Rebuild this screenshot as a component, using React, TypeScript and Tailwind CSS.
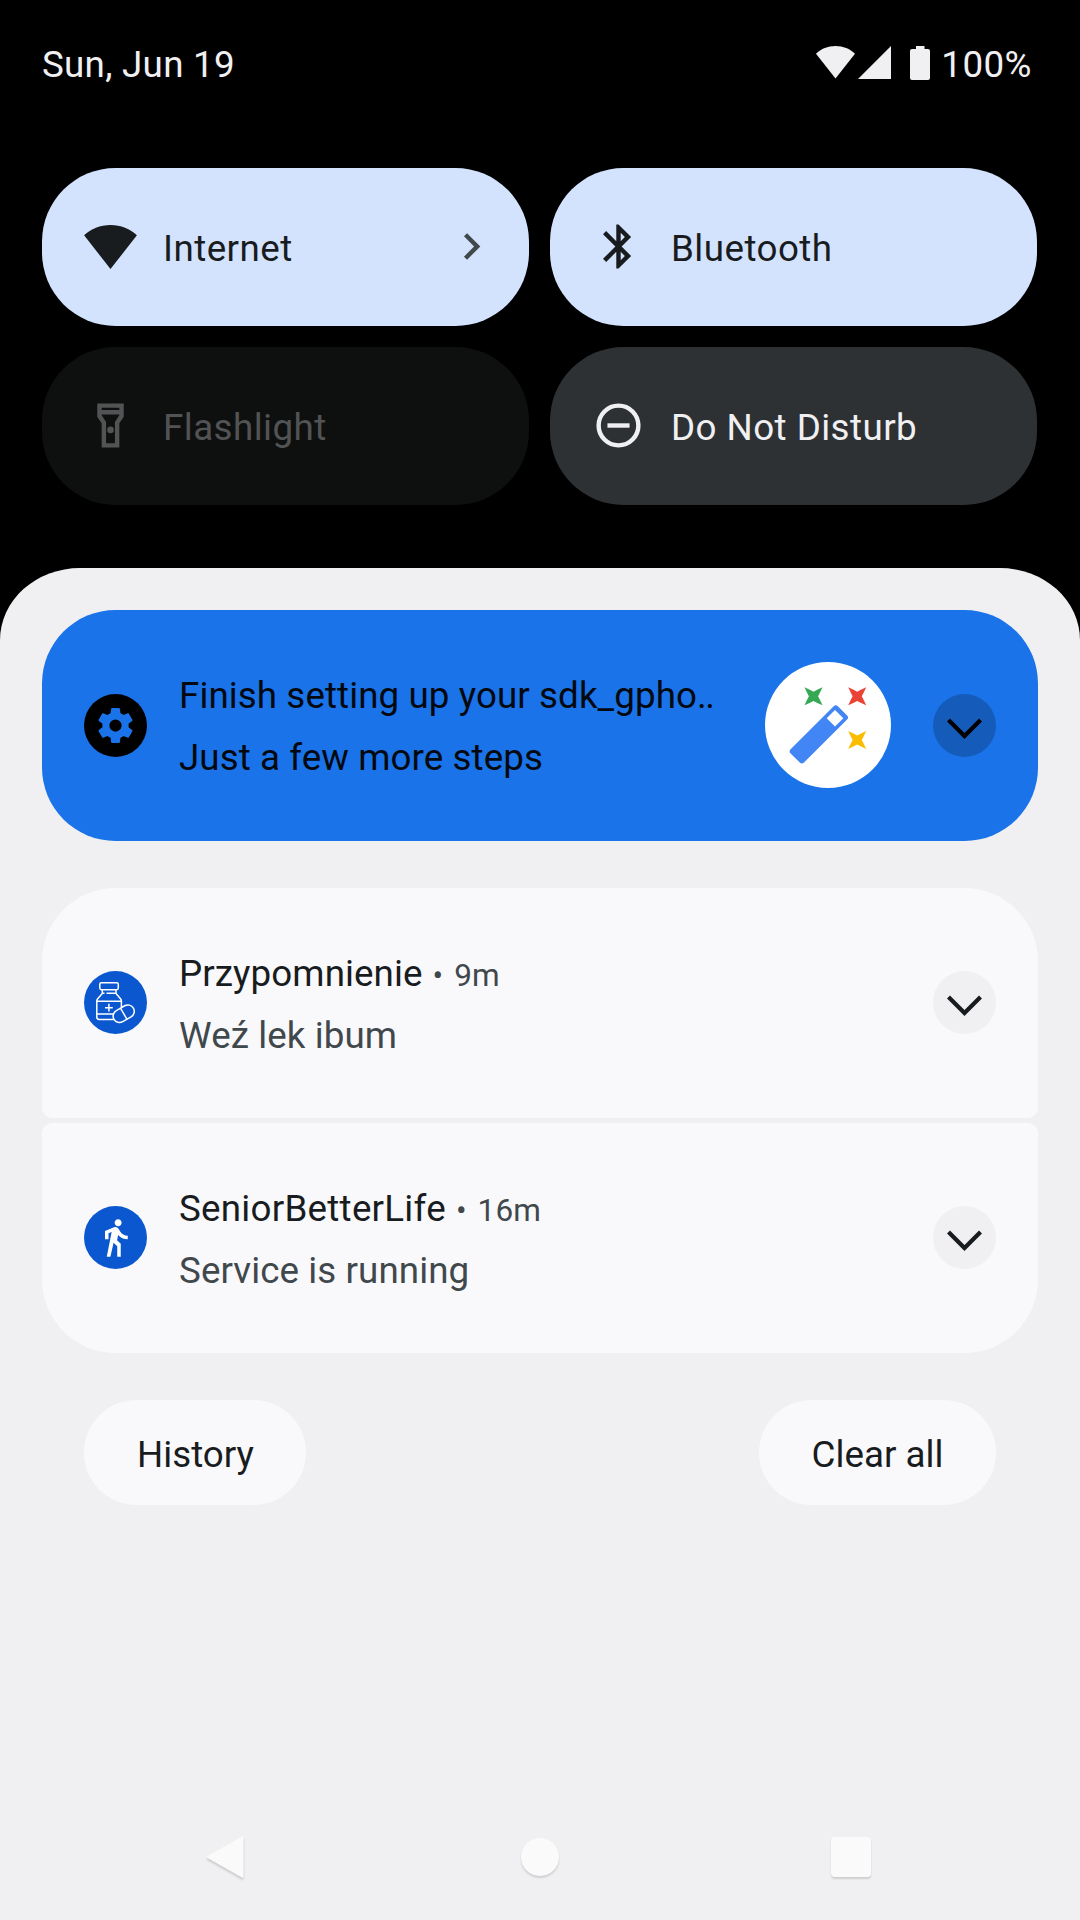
import type { ReactNode } from "react";

function WifiIcon({ className }: { className: string }) {
  return (
    <svg viewBox="0 0 24 20" className={className} fill="currentColor">
      <path d="M12 0C7.3 0 3.1 1.7 0 4.7L12 20 24 4.7C20.900 1.700 16.700 0 12 0z" />
    </svg>
  );
}

function Tile({ icon, label, tone, chevron }: { icon: ReactNode; label: string; tone: string; chevron?: boolean }) {
  return (
    <div className={`flex h-[158px] items-center rounded-[73.5px] pl-[42px] pr-[31px] ${tone}`}>
      <div className="mb-px flex size-[53px] shrink-0 items-center justify-center">{icon}</div>
      <div className="ml-[26px] flex-1 pt-[3px] leading-[50px] tracking-[0.45px]">{label}</div>
      {chevron && (
        <svg viewBox="0 0 24 24" className="mb-px size-[53px] text-[#41484c]" fill="currentColor">
          <path d="M10 6 8.590 7.410 13.170 12l-4.580 4.590L10 18l6-6z" />
        </svg>
      )}
    </div>
  );
}

function ExpandButton({ tone }: { tone: string }) {
  return (
    <div className={`mb-px flex size-[63px] shrink-0 items-center justify-center rounded-full ${tone}`}>
      <svg viewBox="0 0 63 63" className="size-[63px]" fill="none" stroke="currentColor" strokeWidth="4.2">
        <path d="M15.500 26 31.500 42 47.500 26" />
      </svg>
    </div>
  );
}

function Notification({
  icon,
  title,
  time,
  body,
  tone,
  bodyTone,
  expandTone,
  image,
}: {
  icon: ReactNode;
  title: ReactNode;
  time?: string;
  body: string;
  tone: string;
  bodyTone: string;
  expandTone: string;
  image?: ReactNode;
}) {
  return (
    <div className={`flex items-center px-[42px] ${tone}`}>
      <div className="mb-px shrink-0">{icon}</div>
      <div
        className={`ml-[32px] flex-1 leading-[62px] tracking-[0.08px] whitespace-nowrap ${time ? "pt-[4px]" : "pt-[2px]"}`}
      >
        <div className="flex h-[62px] items-baseline">
          {title}
          {time && (
            <span className="ml-[10px] flex gap-[11px] text-[31.5px] text-[#41484c]">
              <span>•</span>
              <span>{time}</span>
            </span>
          )}
        </div>
        <div className={bodyTone}>{body}</div>
      </div>
      {image}
      <ExpandButton tone={expandTone} />
    </div>
  );
}

const star = "M-9-9Q-3.500-6.500 0-4.600 3.500-6.500 9-9 6.500-3.500 4.600 0 6.500 3.500 9 9 3.500 6.500 0 4.600-3.500 6.500-9 9-6.500 3.500-4.600 0-6.500-3.500-9-9z";

function MagicWand() {
  return (
    <svg viewBox="0 0 126 126" className="mr-[42px] mb-[2px] size-[126px] shrink-0">
      <circle cx="63" cy="63" r="63" fill="#fff" />
      <path
        fill="#4285f4"
        fillRule="evenodd"
        d="M25.600 87.300 68.700 44.200a3 3 0 0 1 4.200 0L82.100 53.400a3 3 0 0 1 0 4.200L39 100.500a3 3 0 0 1-4.200 0L25.600 91.500a3 3 0 0 1 0-4.200zM70 48 61.700 56.300 70 64.500 78.300 56.200z"
      />
      <path d={star} transform="translate(48.500 34.300)" fill="#34a853" />
      <path d={star} transform="translate(92.200 34.300)" fill="#ea4335" />
      <path d={star} transform="translate(92.200 78)" fill="#fbbc04" />
    </svg>
  );
}

function SettingsBadge() {
  return (
    <svg viewBox="0 0 63 63" className="size-[63px] shrink-0">
      <circle cx="31.5" cy="31.5" r="31.5" fill="#000" />
      <g transform="translate(10.500 10.500) scale(1.750)" fill="#1a73e8">
        <path d="M19.440 12.990c.04-.32.06-.65.06-.99s-.02-.67-.07-.99l2.110-1.650c.19-.15.240-.42.120-.64l-2-3.460c-.12-.22-.39-.3-.61-.22l-2.490 1c-.52-.4-1.080-.73-1.690-.98l-.38-2.650A.49.49 0 0 0 14 2h-4c-.25 0-.46.180-.49.420l-.38 2.650c-.61.250-1.170.590-1.690.980l-2.490-1c-.23-.09-.49 0-.61.220l-2 3.460c-.13.220-.07.490.120.640l2.110 1.650c-.04.320-.07.650-.07.990s.03.670.07.980l-2.110 1.650c-.19.150-.24.420-.12.640l2 3.460c.12.220.390.300.610.220l2.490-1c.52.400 1.080.730 1.690.980l.38 2.650c.03.240.240.420.490.420h4c.25 0 .46-.18.490-.42l.38-2.650c.61-.25 1.170-.59 1.690-.98l2.490 1c.23.090.490 0 .610-.22l2-3.460c.12-.22.070-.49-.12-.64l-2.110-1.650zM12 15.500a3.500 3.500 0 1 1 0-7 3.500 3.500 0 0 1 0 7z" />
      </g>
    </svg>
  );
}

function MedicineBadge() {
  return (
    <svg viewBox="0 0 63 63" className="size-[63px] shrink-0" fill="none" stroke="#fff" strokeWidth="1.5">
      <circle cx="31.5" cy="31.5" r="31.5" fill="#0b57d0" stroke="none" />
      <rect x="15.800" y="11.700" width="18.500" height="7" rx="1.600" />
      <path d="M18.300 19v3.500L13.500 28c-.5.700-.7 1.300-.7 2v16c0 1.500.9 2.400 2.400 2.400h14.500M32 19v3.500l4.700 5.500c.5.700.7 1.300.7 2v6M18.500 22.300h2m2 0h9.500M13 30.200h24.300M13 43h16.500M24.900 32.800v7.800M21 36.700h7.800" />
      <g transform="rotate(-30 39.700 42.700)">
        <rect x="28.500" y="36.300" width="22.400" height="12.800" rx="6.400" fill="#0b57d0" />
        <path d="M39.700 36.300v12.800" />
      </g>
    </svg>
  );
}

function WalkBadge() {
  return (
    <svg viewBox="0 0 63 63" className="size-[63px] shrink-0">
      <circle cx="31.5" cy="31.5" r="31.5" fill="#0b57d0" />
      <path
        transform="translate(10.500 10.500) scale(1.750)"
        fill="#fff"
        d="M13.500 5.500c1.100 0 2-.9 2-2s-.9-2-2-2-2 .9-2 2 .9 2 2 2zM9.800 8.900 7 23h2.100l1.800-8 2.100 2v6h2v-7.500l-2.100-2 .6-3C14.800 12 16.800 13 19 13v-2c-1.900 0-3.500-1-4.300-2.400l-1-1.600c-.4-.6-1-1-1.700-1-.3 0-.5.100-.8.100L6 8.300V13h2V9.600l1.800-.7"
      />
    </svg>
  );
}

export default function App() {
  return (
    <div className="flex h-[1920px] w-[1080px] flex-col overflow-hidden bg-black font-['Roboto',sans-serif] text-[36.75px] text-[#191c1e]">
      <header className="flex h-[168px] items-start justify-between pt-[39px] pl-[42px] pr-[48px] leading-[50px] text-[#f0f0f3]">
        <div className="pt-px tracking-[0.27px]">Sun, Jun 19</div>
        <div className="flex">
          <WifiIcon className="mt-[7px] h-[32.5px] w-[39px]" />
          <svg viewBox="0 0 33 33" className="mt-[7px] ml-[3px] size-[33px]" fill="currentColor">
            <path d="M33 0v33H0z" />
          </svg>
          <svg viewBox="0 0 20 34" className="mt-[7px] ml-[19px] h-[34px] w-[20px]" fill="currentColor">
            <path d="M6 0h8.500v3H18a2 2 0 0 1 2 2v27a2 2 0 0 1-2 2H2a2 2 0 0 1-2-2V5a2 2 0 0 1 2-2h4z" />
          </svg>
          <div className="ml-[11px] pt-px tracking-[0.45px]">100%</div>
        </div>
      </header>

      <section className="grid grid-cols-2 gap-[21px] pl-[42px] pr-[43px]">
        <Tile
          label="Internet"
          chevron
          tone="bg-[#d3e3fd]"
          icon={<WifiIcon className="h-[44px] w-[53px]" />}
        />
        <Tile
          label="Bluetooth"
          tone="bg-[#d3e3fd]"
          icon={
            <svg viewBox="0 0 24 24" className="size-[53px]" fill="currentColor">
              <path d="M17.710 7.710 12 2h-1v7.590L6.410 5 5 6.410 10.590 12 5 17.590 6.410 19 11 14.410V22h1l5.710-5.710-4.300-4.290 4.300-4.290zM13 5.830l1.880 1.880L13 9.590V5.830zm1.880 10.460L13 18.170v-3.760l1.880 1.880z" />
            </svg>
          }
        />
        <Tile
          label="Flashlight"
          tone="bg-[#0e100f] text-[#525354]"
          icon={
            <svg viewBox="0 0 24 24" className="size-[53px]" fill="currentColor">
              <path d="M18 2H6v6l2 3v11h8V11l2-3V2zm-2 2v1H8V4h8zm-2 6.400V20h-4V10.400L8 7.400V7h8v.4l-2 3z" />
              <circle cx="12" cy="14" r="1.500" />
            </svg>
          }
        />
        <Tile
          label="Do Not Disturb"
          tone="bg-[#2e3133] text-[#f0f0f3]"
          icon={
            <svg viewBox="0 0 24 24" className="size-[53px]" fill="none" stroke="currentColor" strokeWidth="2">
              <circle cx="12" cy="12" r="9" />
              <path d="M7 12h10" />
            </svg>
          }
        />
      </section>

      <main className="mt-[63px] flex flex-1 flex-col rounded-t-[80px_72px] bg-[#f0f0f2] px-[42px] pt-[42px]">
        <Notification
          icon={<SettingsBadge />}
          title={
            <span>
              Finish setting up your sdk_gpho<span className="tracking-[-1.6px]">..</span>
            </span>
          }
          body="Just a few more steps"
          tone="h-[231px] rounded-[73.5px] bg-[#1a73e8] pt-px text-[#04080f]"
          bodyTone="text-[#04080f]"
          expandTone="bg-[#155cba] text-black"
          image={<MagicWand />}
        />
        <div className="mt-[47px] flex flex-col gap-[5px]">
          <Notification
            icon={<MedicineBadge />}
            title="Przypomnienie"
            time="9m"
            body="Weź lek ibum"
            tone="h-[230px] rounded-t-[73.5px] rounded-b-[10px] bg-[#f9f9fc]"
            bodyTone="text-[#41484c]"
            expandTone="bg-[#f0f0f2] text-[#191c1e]"
          />
          <Notification
            icon={<WalkBadge />}
            title={<span className="tracking-[0.25px]">SeniorBetterLife</span>}
            time="16m"
            body="Service is running"
            tone="h-[230px] rounded-t-[10px] rounded-b-[73.5px] bg-[#f9f9fc]"
            bodyTone="text-[#41484c]"
            expandTone="bg-[#f0f0f2] text-[#191c1e]"
          />
        </div>
        <div className="mt-[47px] flex justify-between px-[42px]">
          <button className="h-[105px] w-[222px] rounded-full bg-[#f9f9fc] pt-[4px] pl-px leading-[101px]">History</button>
          <button className="h-[105px] w-[237px] rounded-full bg-[#f9f9fc] pt-[4px] leading-[101px]">Clear all</button>
        </div>
        <nav className="mt-auto mb-[39px] flex h-[48px] items-center justify-between pl-[163px] pr-[167px] text-[#fafafa]">
          <svg viewBox="0 0 40 48" className="h-[48px] w-[40px] drop-shadow-[0_2px_1px_rgba(0,0,0,0.16)]" fill="currentColor">
            <path d="M37 3.500Q38.500 2.700 38.500 4.500V43.500Q38.500 45.300 37 44.500L2.500 25Q1 24 2.500 23z" />
          </svg>
          <div className="ml-[3px] size-[38px] rounded-full bg-[#fafafa] shadow-[0_2px_2px_rgba(0,0,0,0.14)]" />
          <div className="size-[40px] rounded-[4px] bg-[#fafafa] shadow-[0_2px_2px_rgba(0,0,0,0.14)]" />
        </nav>
      </main>
    </div>
  );
}
